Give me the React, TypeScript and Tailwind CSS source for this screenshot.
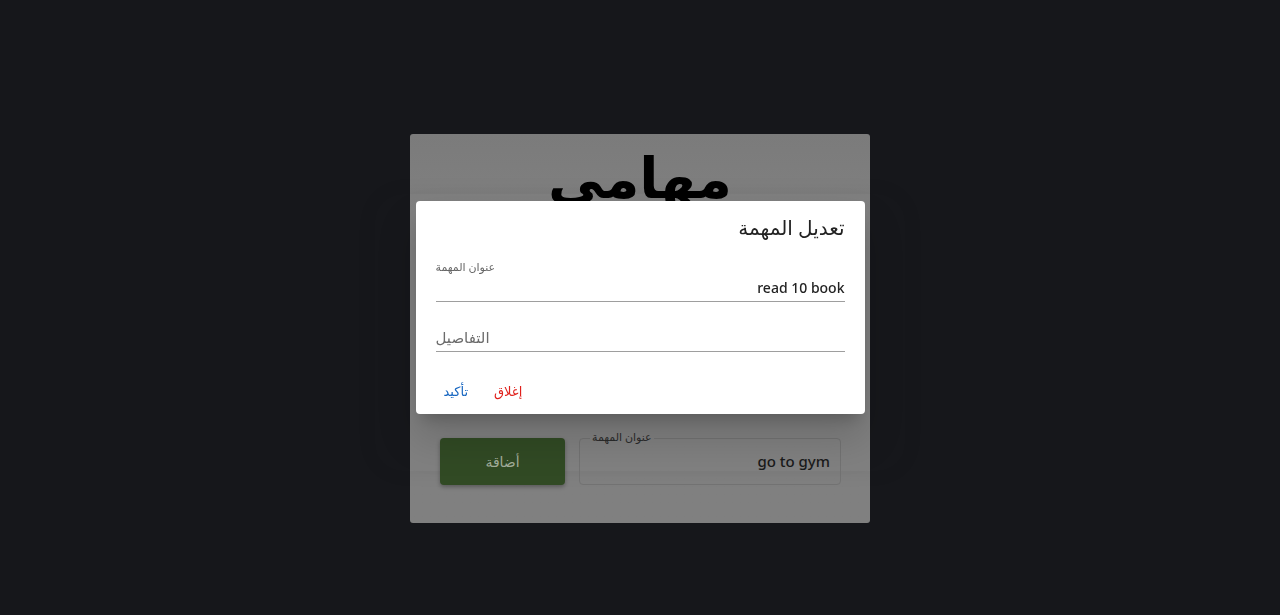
import React from 'react';

const font = { fontFamily: '"Noto Sans", "DejaVu Sans", sans-serif' };

export default function App() {
  return (
    <div className="relative min-h-screen w-full bg-[#16171b]" style={font}>
      {/* page panel (dimmed by overlay) */}
      <div className="flex justify-center pt-[134px]">
        <div className="relative flex h-[389px] w-[460px] flex-col items-center rounded-[3px] bg-gradient-to-b from-[#7b7b7b] to-[#808080] to-[20%]">
          <h1 className="mt-[2px] text-[56px] font-bold leading-[80px] text-black" dir="rtl">مهامي</h1>
          <div className="mt-[-22px] h-[277px] w-[530px] shrink-0 rounded-[28px] shadow-[0_0_20px_rgba(0,0,0,0.07)]">
            <div className="mt-[244px] flex items-center gap-[14px] pl-[65px]">
              <button className="h-[47px] w-[125px] rounded-[4px] bg-[#314a24] text-[14px] text-[#a3ae9b] shadow-[0_2px_4px_rgba(0,0,0,0.3)]">
                أضاقة
              </button>
              <div className="relative h-[47px] w-[262px] rounded-[4px] border border-[#727272]">
                <span className="absolute left-[10px] top-[-9px] bg-[#808080] px-[2px] text-[11px] leading-[14px] text-[#2a2a2a]">
                  عنوان المهمة
                </span>
                <div className="flex h-full items-center justify-end pr-[10px] text-[15px] font-medium text-[#1a1a1a]">go to gym</div>
              </div>
            </div>
          </div>
        </div>
      </div>

      {/* dialog */}
      <div className="fixed inset-0 flex items-center justify-center">
        <div className="flex h-[213px] w-[449px] flex-col rounded-[4px] bg-white px-[20px] shadow-[0_11px_15px_-7px_rgba(0,0,0,0.2),0_24px_38px_3px_rgba(0,0,0,0.14)]">
          <div className="mt-[13px] text-right text-[20px] leading-[28px] text-[#222]" dir="rtl">تعديل المهمة</div>
          <div className="mt-[18px] text-[11px] leading-[14px] text-[#666]">عنوان المهمة</div>
          <div className="mt-[4px] border-b border-[#9e9e9e] pb-[3px] text-right text-[14px] font-medium leading-[20px] text-[#222]">
            read 10 book
          </div>
          <div className="mt-[25px] border-b border-[#9e9e9e] pb-[3px] text-[15px] leading-[21px] text-[#6b6b6b]">التفاصيل</div>
          <div className="mt-[30px] flex items-center gap-[26px] pl-[8px] text-[13px] leading-[18px]">
            <span className="text-[#1565c0]">تأكيد</span>
            <span className="text-[#e0201b]">إغلاق</span>
          </div>
        </div>
      </div>
    </div>
  );
}
